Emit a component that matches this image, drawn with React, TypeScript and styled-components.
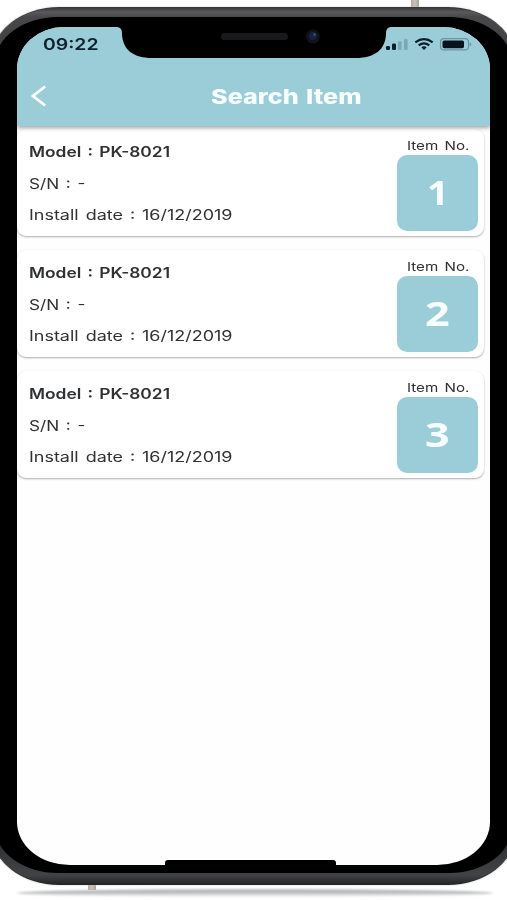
import React, { useLayoutEffect, useRef, useState } from "react";
import styled, { createGlobalStyle } from "styled-components";

const GlobalStyle = createGlobalStyle`
  * { box-sizing: border-box; }
  html, body { margin: 0; background: #fff; overflow: hidden; }
  body { font-family: "Inter", "Liberation Sans", sans-serif; color: #2d2e30; }
`;

const Stage = styled.main`
  position: relative;
  width: 507px;
  height: 900px;
  overflow: hidden;
  background: #fff;
`;

const SideButton = styled.i<{ $x: number; $y: number }>`
  position: absolute;
  left: ${(p) => p.$x}px;
  top: ${(p) => p.$y}px;
  width: 8px;
  height: 11px;
  background: linear-gradient(90deg, #b5aba2, #cbc3bb 50%, #aaa198);
`;

const GroundShadow = styled.i`
  position: absolute;
  left: 17px;
  top: 889px;
  width: 476px;
  height: 8px;
  border-radius: 50%;
  background: linear-gradient(#bfc1c3, #b2b4b6 35%, #e0e0e0 75%, #fafafa);
  filter: blur(1px);
`;

const Body = styled.div`
  position: relative;
  width: 523px;
  height: 878px;
  margin-left: -8px;
  top: 7px;
  padding: 1px;
  border-radius: 67px / 51px;
  background: linear-gradient(#37373a, #8a8178 8%, #a0978e 50%, #8a8178 92%, #242426);
  box-shadow: 0 0 2px #c9c4be;
`;

const Rim = styled.div`
  height: 100%;
  padding: 9px 2px 11px;
  border-radius: 66px / 50px;
  background: linear-gradient(#3a3a3c 0, #5a5a5c 4px, #48484a 9px, #3c3c3e 60px, #29292b 820px, #414346 867px, #252628 876px);
`;

const Bezel = styled.div`
  height: 100%;
  padding: 10px 22px 8px;
  border-radius: 63px / 46px;
  background: #000;
`;

const Screen = styled.div`
  position: relative;
  height: 838px;
  width: 473px;
  overflow: hidden;
  display: flex;
  flex-direction: column;
  border-radius: 47px 47px 53px 53px / 42px 42px 43px 43px;
  background: #fefefe;
`;

const Header = styled.header`
  position: relative;
  z-index: 1;
  flex: 0 0 99px;
  background: #9bcdd9;
  box-shadow: 0 2px 4px rgba(70, 70, 70, 0.48);
`;

const StatusBar = styled.div`
  display: flex;
  justify-content: space-between;
  height: 42px;
  padding: 7px 18px 0 26px;
`;

const StatusIcons = styled.svg`
  width: 87px;
  height: 20px;
  display: block;
`;

const Notch = styled.svg`
  position: absolute;
  z-index: 2;
  left: 100px;
  top: 0;
  width: 274px;
  height: 32px;
`;

const NavBar = styled.div`
  display: grid;
  grid-template-columns: 194px 1fr;
  align-items: center;
  height: 54px;
`;

const BackIcon = styled.svg`
  width: 18px;
  height: 24px;
  margin-left: 13px;
`;

const Title = styled.div`
  padding-top: 2px;
`;

const List = styled.div`
  display: flex;
  flex-direction: column;
  gap: 14px;
  padding: 3px 6px 0 0;
`;

const Card = styled.article`
  display: flex;
  justify-content: space-between;
  height: 107px;
  padding: 0 6px 0 12px;
  border-radius: 9px;
  background: #fff;
  box-shadow: 0 1px 2px rgba(60, 60, 60, 0.42);
`;

const Details = styled.div`
  display: flex;
  flex-direction: column;
  gap: 11.5px;
  padding-top: 13.4px;
`;

const Badge = styled.div`
  display: flex;
  flex-direction: column;
  align-items: center;
  width: 81px;
  padding-top: 8px;
`;

const Tile = styled.div`
  display: flex;
  align-items: center;
  justify-content: center;
  width: 81px;
  height: 76px;
  margin-top: 1px;
  padding-bottom: 2px;
  border-radius: 10px;
  background: #9bcdd8;
`;

const HomeBar = styled.i`
  position: absolute;
  left: 148px;
  bottom: 0;
  width: 171px;
  height: 5px;
  border-radius: 3px 3px 0 0;
  background: #000;
`;

const LabelBox = styled.span<{ $w: number; $h: number }>`
  display: block;
  width: ${(p) => p.$w}px;
  height: ${(p) => p.$h}px;
`;

const LabelText = styled.span<{ $size: number; $weight: number; $color: string; $h: number; $font: string }>`
  display: inline-block;
  vertical-align: top;
  white-space: nowrap;
  word-spacing: 1.5px;
  transform-origin: 0 50%;
  font: ${(p) => p.$weight} ${(p) => p.$size}px/${(p) => p.$h}px "${(p) => p.$font}", sans-serif;
  color: ${(p) => p.$color};
`;

type LabelProps = {
  text: string;
  width: number;
  height?: number;
  size: number;
  weight?: number;
  color?: string;
  font?: string;
};

/* A line of extended type, stretched to a given measure. */
function Label({ text, width, height = 20, size, weight = 400, color = "#303133", font = "Inter" }: LabelProps) {
  const ref = useRef<HTMLSpanElement>(null);
  const [scale, setScale] = useState(1);
  useLayoutEffect(() => {
    if (ref.current) setScale(width / ref.current.offsetWidth);
  }, [text, width]);
  return (
    <LabelBox $w={width} $h={height}>
      <LabelText
        ref={ref}
        $size={size}
        $weight={weight}
        $color={color}
        $h={height}
        $font={font}
        style={{ transform: `scaleX(${scale})` }}
      >
        {text}
      </LabelText>
    </LabelBox>
  );
}

const items = [
  { no: "1", width: 22, model: "PK-8021", serial: "-", installed: "16/12/2019" },
  { no: "2", width: 25, model: "PK-8021", serial: "-", installed: "16/12/2019" },
  { no: "3", width: 25, model: "PK-8021", serial: "-", installed: "16/12/2019" },
];

export default function App() {
  return (
    <>
      <GlobalStyle />
      <Stage>
        <SideButton $x={411} $y={-3} />
        <SideButton $x={88} $y={879} />
        <GroundShadow />
        <Body>
          <Rim>
            <Bezel>
              <Screen>
                <Header>
                  <StatusBar>
                    <Label text="09:22" width={55} height={22} size={15.5} weight={600} color="#10212c" />
                    <StatusIcons viewBox="0 0 87 20">
                      <g fill="#0d1f2b">
                        <rect x="1" y="12" width="4" height="4" rx="1.2" />
                        <rect x="7" y="9.5" width="4" height="6.5" rx="1.2" />
                      </g>
                      <g fill="#78a9b5">
                        <rect x="13" y="7.3" width="3.6" height="8.7" rx="1" />
                        <rect x="19" y="5" width="3.6" height="11" rx="1" />
                      </g>
                      <g fill="none" stroke="#0d1f2b" strokeWidth="2.2">
                        <path d="M30.3 8.3Q39 1.8 47.7 8.3" />
                        <path d="M33.7 11.4Q39 7.2 44.3 11.4" />
                      </g>
                      <path d="M36.3 13.2Q39 11.4 41.7 13.2L39 16Z" fill="#0d1f2b" />
                      <rect x="55.5" y="4.7" width="28" height="11.2" rx="3.5" fill="none" stroke="#6d949f" strokeWidth="1.2" />
                      <rect x="57.5" y="6.5" width="21.5" height="7.7" rx="1.7" fill="#07141c" />
                      <path d="M84.7 8v4.6Q87.7 10.3 84.7 8Z" fill="#6d949f" />
                    </StatusIcons>
                  </StatusBar>
                  <NavBar>
                    <BackIcon viewBox="0 0 18 24" fill="none" stroke="#fff" strokeWidth="2.8">
                      <path d="M15.2 2.5L3 12L15.2 21.5" />
                    </BackIcon>
                    <Title>
                      <Label text="Search Item" width={150} height={24} size={20.5} weight={800} color="#f8ffff" />
                    </Title>
                  </NavBar>
                </Header>
                <List>
                  {items.map((item) => (
                    <Card key={item.no}>
                      <Details>
                        <Label text={`Model : ${item.model}`} width={141} size={14.3} weight={600} />
                        <Label text={`S/N : ${item.serial}`} width={56} size={13.8} />
                        <Label text={`Install date : ${item.installed}`} width={203} size={13.8} />
                      </Details>
                      <Badge>
                        <Label text="Item No." width={62} height={17} size={12} />
                        <Tile>
                          <Label text={item.no} width={item.width} height={40} size={34.5} weight={700} color="#f8ffff" font="Open Sans" />
                        </Tile>
                      </Badge>
                    </Card>
                  ))}
                </List>
                <Notch viewBox="0 0 274 32">
                  <path d="M0 0Q5 .5 5 6C5 23 17 31 35 31H239C257 31 269 23 269 6Q269 .5 274 0Z" fill="#000" />
                  <rect x="104" y="6" width="67" height="7" rx="3.5" fill="#19191b" />
                  <circle cx="196" cy="9.5" r="7" fill="#101216" />
                  <circle cx="196" cy="9" r="4" fill="#17213f" />
                  <circle cx="197.5" cy="7.5" r="1.5" fill="#31477b" />
                </Notch>
                <HomeBar />
              </Screen>
            </Bezel>
          </Rim>
        </Body>
      </Stage>
    </>
  );
}
